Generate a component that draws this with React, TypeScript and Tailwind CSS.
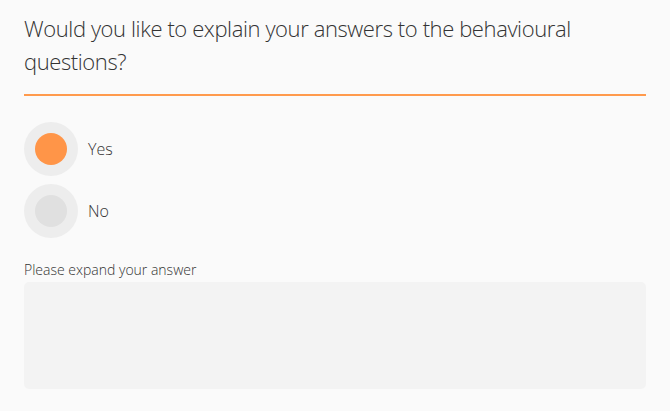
import { useState } from 'react'

const font = { fontFamily: '"Open Sans", "Noto Sans", sans-serif' }

export default function App() {
  const [answer, setAnswer] = useState<'yes' | 'no'>('yes')

  const options: { key: 'yes' | 'no'; label: string }[] = [
    { key: 'yes', label: 'Yes' },
    { key: 'no', label: 'No' },
  ]

  return (
    <div className="min-h-screen bg-[#fafafa] px-6 pt-3 text-[#333]" style={font}>
      <h1 className="text-[22px] leading-[33px] font-light tracking-[-0.4px] pb-4 border-b-2 border-[#ff9a4d]">
        Would you like to explain your answers to the behavioural questions?
      </h1>

      <div className="mt-[26px] flex flex-col gap-2">
        {options.map((o) => (
          <button
            key={o.key}
            onClick={() => setAnswer(o.key)}
            className="flex items-center gap-[10px] text-left"
          >
            <span className="flex h-[54px] w-[54px] items-center justify-center rounded-full bg-[#ededed]">
              <span
                className={
                  answer === o.key
                    ? 'h-8 w-8 rounded-full bg-[#ff9548]'
                    : 'h-8 w-8 rounded-full bg-[#e0e0e0]'
                }
              />
            </span>
            <span className="text-base font-light">{o.label}</span>
          </button>
        ))}
      </div>

      <label className="mt-[22px] block text-sm leading-5 font-light">Please expand your answer</label>
      <textarea className="mt-0.5 block h-[107px] w-full resize-none rounded-[5px] bg-[#f3f3f3] p-3 outline-none" />
    </div>
  )
}
